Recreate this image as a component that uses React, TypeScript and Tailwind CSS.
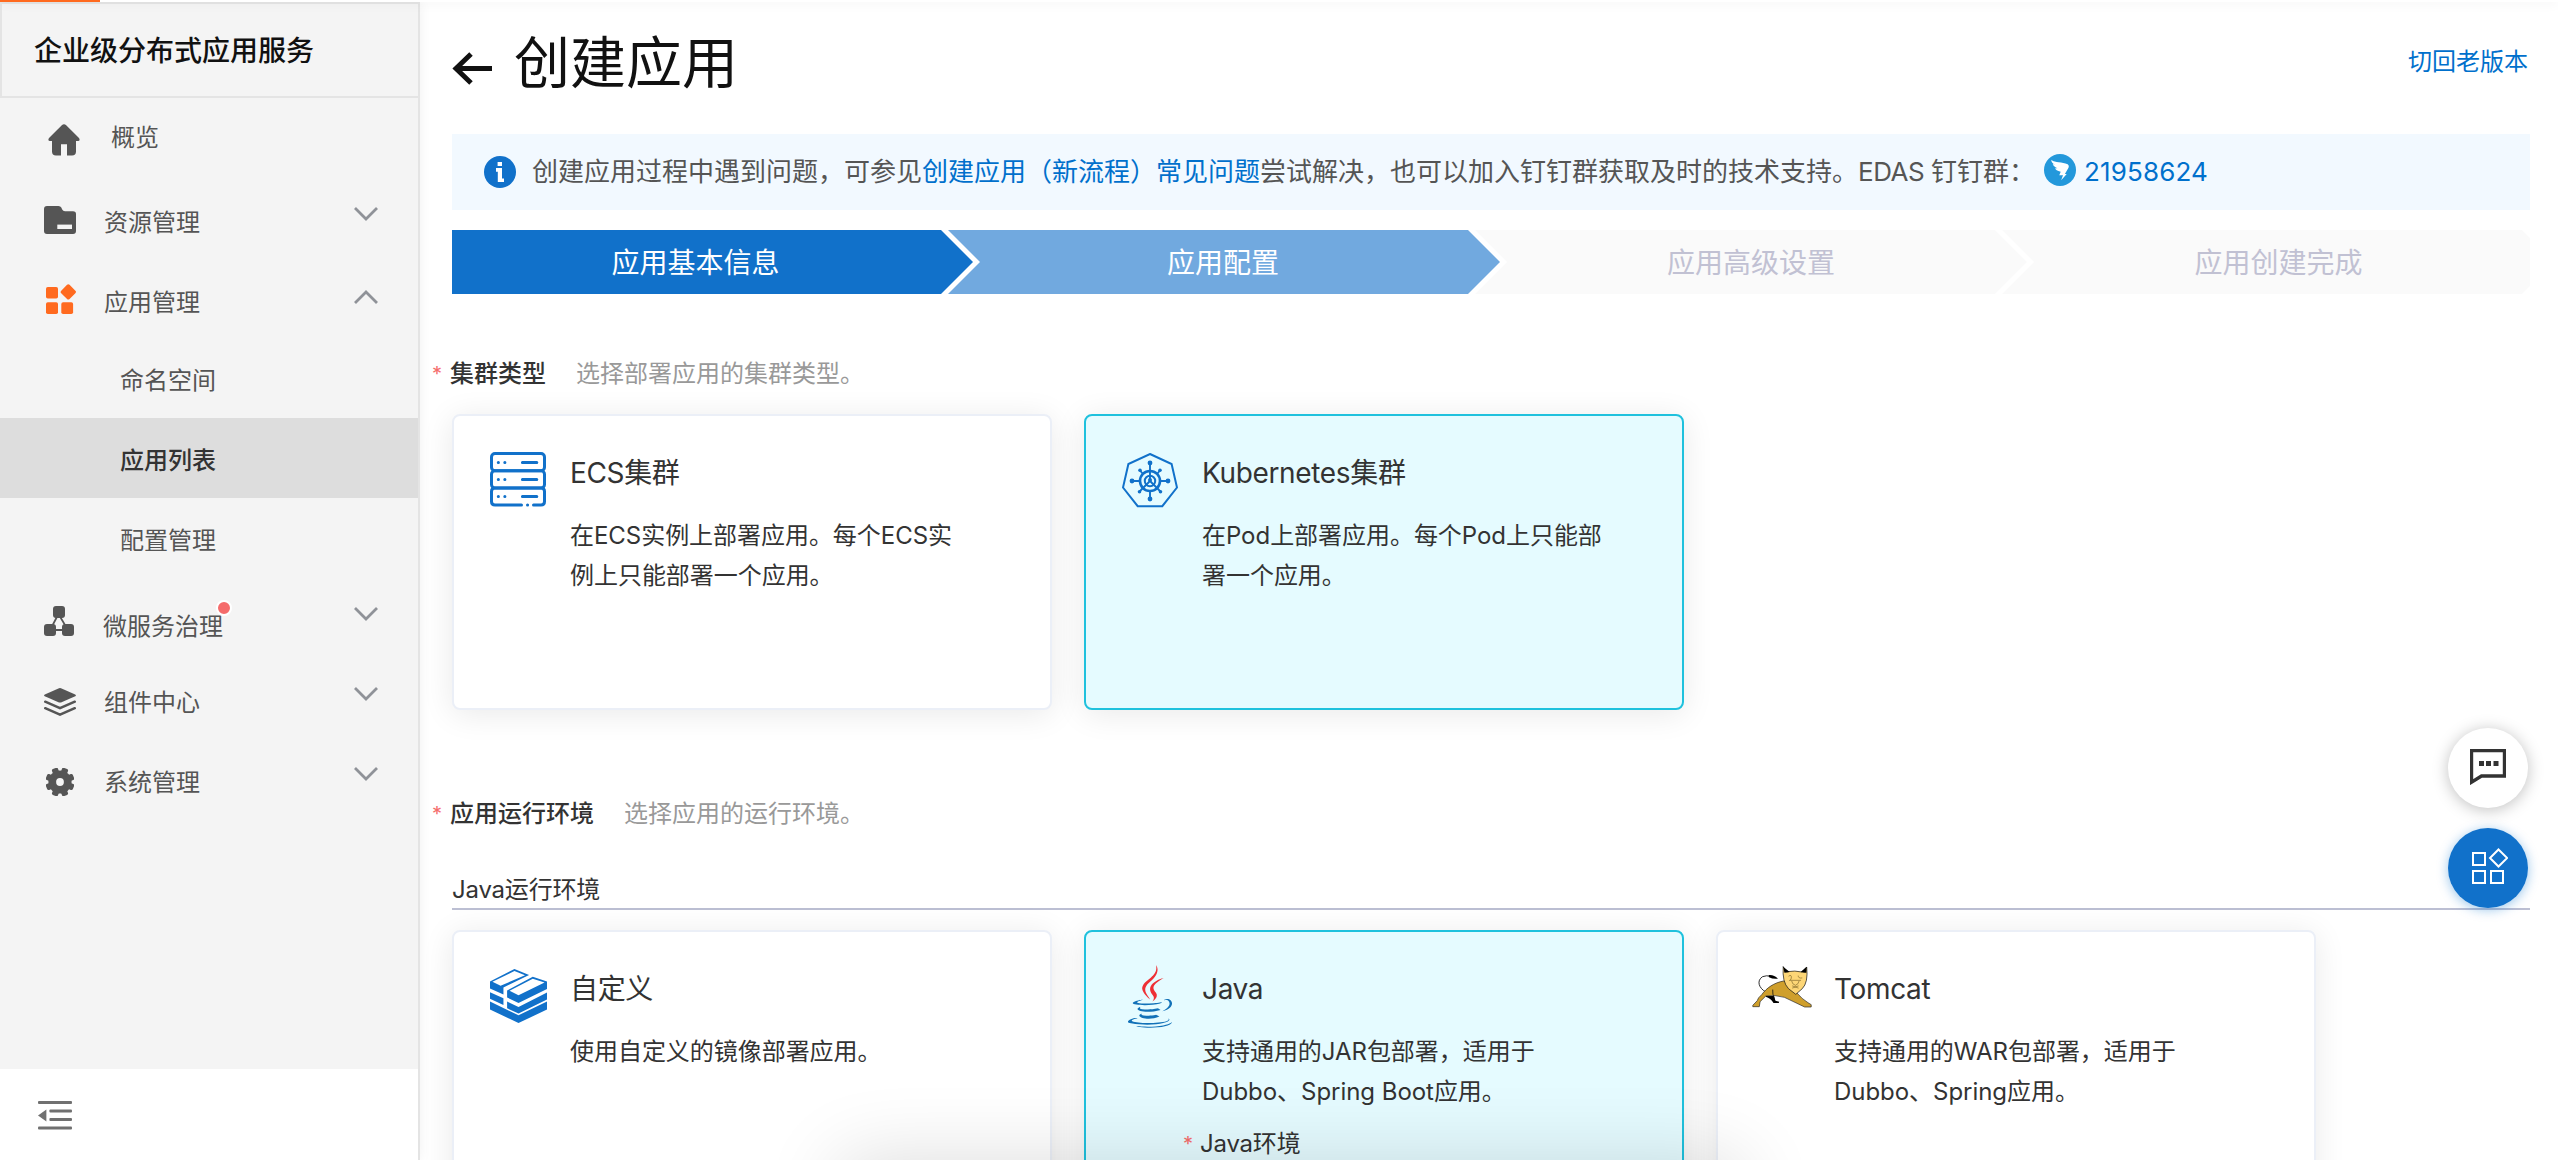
import React from "react";

const FONT = "font-['Inter','Noto_Sans_CJK_SC',sans-serif]";

/* ---------- sidebar icons ---------- */

const HomeIcon = () => (
  <svg width="32" height="32" viewBox="0 0 32 32" fill="#555">
    <path d="M13.8 1.2Q16 -.8 18.2 1.2L31 14Q32.6 16.6 30 17H28V27.5Q28 31.5 24 31.5H19V20.3H13V31.5H8Q4 31.5 4 27.5V17H2Q-.6 16.6 1 14Z" />
  </svg>
);

const FolderIcon = () => (
  <svg width="32" height="28" viewBox="0 0 32 28">
    <path d="M3 0H14.5Q16.5 0 17.3 1.6L18.2 3.6Q19 5.2 21 5.2H29Q32 5.2 32 8V25Q32 28 29 28H3Q0 28 0 25V3Q0 0 3 0Z" fill="#555" />
    <rect x="13.3" y="18.6" width="14.7" height="4.4" fill="#f4f4f4" />
  </svg>
);

const AppsIcon = () => (
  <svg width="30" height="30" viewBox="0 0 30 30" fill="#ff6a1f">
    <rect x="0" y="3" width="12" height="11.5" rx="1.8" />
    <rect x="0" y="18.2" width="12" height="11.8" rx="1.8" />
    <rect x="15.3" y="18.2" width="11.8" height="11.8" rx="1.8" />
    <rect x="16.4" y="2" width="11.8" height="11.8" rx="1.8" transform="rotate(45 22.3 7.9)" />
  </svg>
);

const ServiceIcon = () => (
  <svg width="30" height="30" viewBox="0 0 30 30" fill="#555">
    <path d="M14.5 8L6 24H24Z" fill="none" stroke="#555" strokeWidth="1.8" />
    <rect x="9" y="0" width="12" height="12" rx="3" />
    <rect x="0" y="18" width="12" height="12" rx="3" />
    <rect x="18" y="18" width="12" height="12" rx="3" />
  </svg>
);

const LayersIcon = () => (
  <svg width="32" height="28" viewBox="0 0 32 28">
    <path d="M15 .3Q16 -.1 17 .3L31.2 6.6Q32.6 7.4 31.2 8.2L17 14.4Q16 14.8 15 14.4L.8 8.2Q-.6 7.4 .8 6.6Z" fill="#555" />
    <path d="M1.2 13.7L16 20.2L30.8 13.7M1.2 20.2L16 26.6L30.8 20.2" fill="none" stroke="#555" strokeWidth="2.5" strokeLinecap="round" />
  </svg>
);

const GearIcon = () => (
  <svg width="28" height="28" viewBox="0 0 28 28" fill="#555">
    <circle cx="14" cy="14" r="11.6" />
    {[22.5, 67.5, 112.5, 157.5, 202.5, 247.5, 292.5, 337.5].map((a) => (
      <rect key={a} x="10.8" y="-.6" width="6.4" height="8" rx="1.6" transform={`rotate(${a} 14 14)`} />
    ))}
    <circle cx="14" cy="14" r="3.9" fill="#f4f4f4" />
  </svg>
);

const Chevron = ({ up }: { up?: boolean }) => (
  <svg width="24" height="14" viewBox="0 0 24 14" fill="none" stroke="#8f9298" strokeWidth="2.8">
    <path d={up ? "M1 13L12 2L23 13" : "M1 1L12 12L23 1"} />
  </svg>
);

/* ---------- card icons ---------- */

const ServerIcon = () => (
  <svg width="56" height="55" viewBox="0 0 56 55" fill="none" stroke="#1171ca" strokeWidth="3" strokeLinecap="round">
    <rect x="1.5" y="1.5" width="53" height="17.2" rx="3.5" />
    <rect x="1.5" y="18.7" width="53" height="17.2" rx="3.5" />
    <path d="M31.5 53H5Q1.5 53 1.5 49.5V39.4Q1.5 35.9 5 35.9H51Q54.5 35.9 54.5 39.4V49.5Q54.5 53 51 53H43.5M37.5 53H37.6" />
    {[10.4, 27.4, 44.6].map((y) => (
      <path key={y} d={`M8.3 ${y}H8.4M14.8 ${y}H14.9M32.4 ${y}H46.8`} />
    ))}
  </svg>
);

const KubeIcon = () => (
  <svg width="56" height="55" viewBox="0 0 56 55" fill="none" stroke="#1171ca">
    <path d="M28 1L49.6 11L55 34.5L40.3 53.2H15.7L1 34.5L6.4 11Z" strokeWidth="2" />
    <circle cx="28" cy="28" r="10" strokeWidth="2.6" />
    <circle cx="28" cy="28" r="5.2" strokeWidth="2" />
    <path d="M28 28V9M28 38V46M18 28H10M38 28H46M28 28L19.5 36.5L17.5 38.7M28 28L36.5 36.5L38.5 38.7M21 21L18 17.5M35 21L38 17.5" strokeWidth="1.9" />
    <g fill="#1171ca" stroke="none">
      <circle cx="28" cy="10" r="2.4" />
      <circle cx="28" cy="46" r="2.4" />
      <circle cx="10" cy="28" r="2.4" />
      <circle cx="46" cy="28" r="2.4" />
      <circle cx="18" cy="17.3" r="1.8" />
      <circle cx="38" cy="17.3" r="1.8" />
      <circle cx="17.5" cy="38.7" r="1.8" />
      <circle cx="38.5" cy="38.7" r="1.8" />
      <circle cx="28" cy="27" r="2" />
    </g>
  </svg>
);

const StackIcon = () => (
  <svg width="57" height="54" viewBox="147 567 140 161" preserveAspectRatio="none" fill="#1171ca">
    <path fillRule="evenodd" d="M147 604L207 567L243 585L180 622V643L147 625ZM153 605L173 617L233 586L207 573Z" />
    <path d="M147 636L180 654V674L147 656Z" />
    <path fillRule="evenodd" d="M189 631L252 590L287 604V627L217 668L189 652ZM195 632L217 645L281 607L252 596Z" />
    <path d="M189 664L217 680L287 637V658L217 700L189 684Z" />
    <path d="M147 664L217 705L287 664V688L217 728L147 688Z" />
  </svg>
);

const JavaIcon = () => (
  <svg width="46" height="63" viewBox="16 1 96 126" preserveAspectRatio="none">
    <g fill="#1271b8">
      <path d="M47.617 98.12s-4.767 2.774 3.397 3.71c9.892 1.13 14.947.968 25.845-1.092 0 0 2.871 1.795 6.873 3.351-24.439 10.47-55.308-.607-36.115-5.969zm-2.988-13.665s-5.348 3.959 2.823 4.805c10.567 1.091 18.91 1.18 33.354-1.6 0 0 1.993 2.025 5.132 3.131-29.542 8.64-62.446.68-41.309-6.336z" />
      <path d="M102.123 108.229s3.529 2.91-3.888 5.159c-14.102 4.272-58.706 5.56-71.094.171-4.451-1.938 3.899-4.625 6.526-5.192 2.739-.593 4.303-.485 4.303-.485-4.953-3.487-32.013 6.85-13.743 9.815 49.821 8.076 90.817-3.637 77.896-9.468zM49.912 70.294s-22.686 5.389-8.033 7.348c6.188.828 18.518.638 30.011-.326 9.39-.789 18.813-2.474 18.813-2.474s-3.308 1.419-5.704 3.053c-23.042 6.061-67.544 3.238-54.731-2.958 10.832-5.239 19.644-4.643 19.644-4.643zm40.697 22.747c23.421-12.167 12.591-23.86 5.032-22.285-1.848.385-2.677.72-2.677.72s.688-1.079 2-1.543c14.953-5.255 26.451 15.503-4.823 23.725 0-.002.359-.327.468-.617z" />
      <path d="M52.214 126.021c22.476 1.437 57-.8 57.817-11.436 0 0-1.571 4.032-18.577 7.231-19.186 3.612-42.854 3.191-56.887.874 0 .001 2.875 2.381 17.647 3.331z" />
    </g>
    <g fill="#ee3035">
      <path d="M69.802 61.271c6.025 6.935-1.58 13.17-1.58 13.17s15.289-7.891 8.269-17.777c-6.559-9.215-11.587-13.792 15.635-29.58 0 .001-42.731 10.67-22.324 34.187z" />
      <path d="M76.491 1.587S89.459 14.563 64.188 34.51c-20.266 16.006-4.621 25.13-.007 35.559-11.831-10.673-20.509-20.07-14.688-28.815C58.041 28.42 81.722 22.195 76.491 1.587z" />
    </g>
  </svg>
);

const TomcatIcon = () => (
  <svg width="60" height="42" viewBox="126 196 148 126" preserveAspectRatio="none" strokeLinejoin="round" strokeLinecap="round">
    <path d="M160 274C142 262 137 240 152 228Q162 223 172 227" fill="none" stroke="#111" strokeWidth="2.4" />
    <path d="M167 223Q180 221 190 234Q178 236 168 230Z" fill="#000" />
    <path d="M160 284L180 286L184 300L193 303L192 307H179Q172 292 160 288Z" fill="#000" />
    <path d="M204 241C180 246 162 262 150 282Q140 292 139 300L128 314V318H144L146 303L160 286Q184 282 206 290L256 319H272V312L264 306Q250 296 236 276Z" fill="#cf9f2c" stroke="#222" strokeWidth="1.8" />
    <path d="M177 268Q176 280 181 294" fill="none" stroke="#111" strokeWidth="2.2" />
    <path d="M203 199L213 213Q232 209 249 214L261 199Q265 246 250 264L234 281L216 264Q200 244 203 199Z" fill="#fdd676" stroke="#111" strokeWidth="1.9" />
    <path d="M203 198L219 214Q212 216 206 216ZM261 198L246 214Q252 217 260 216Z" fill="#000" />
    <path d="M217 226Q224 220 223 232Q223 238 218 240M249 232Q240 234 240 226M221 239H246M224 242Q225 251 233 254Q241 251 242 242M226 256L240 262M240 256L226 262" fill="none" stroke="#5a4614" strokeWidth="1.4" />
  </svg>
);

/* ---------- building blocks ---------- */

type NavProps = {
  icon: React.ReactNode;
  label: string;
  iconCls: string;
  labelCls: string;
  chevronCls?: string;
  up?: boolean;
  dot?: boolean;
};

const NavItem = ({ icon, label, iconCls, labelCls, chevronCls, up, dot }: NavProps) => (
  <div className="flex h-20 items-center">
    <span className={`flex shrink-0 ${iconCls}`}>{icon}</span>
    <span className={`relative text-2xl leading-8 text-[#555] ${labelCls}`}>
      {label}
      {dot && <i className="absolute -top-[11px] -right-[9px] size-4 rounded-full border-2 border-white bg-[#f56c6c]" />}
    </span>
    {chevronCls && (
      <span className={`mr-10 ml-auto flex ${chevronCls}`}>
        <Chevron up={up} />
      </span>
    )}
  </div>
);

const SubItem = ({ label, active }: { label: string; active?: boolean }) => (
  <div
    className={
      active
        ? "flex h-20 items-center bg-[#ddd] pt-1.5 pl-[120px] text-2xl font-medium text-[#333]"
        : "flex h-20 items-center pt-1.5 pl-[120px] text-2xl text-[#555]"
    }
  >
    {label}
  </div>
);

const FieldLabel = ({ label, hint }: { label: string; hint: string }) => (
  <div className="flex h-10 items-center pt-0.5 text-2xl">
    <span className="-ml-5 w-[18px] text-xl text-[#f56c6c]">*</span>
    <span className="font-medium text-[#333]">{label}</span>
    <span className="ml-[30px] text-[#999]">{hint}</span>
  </div>
);

type CardProps = {
  icon: React.ReactNode;
  iconCls: string;
  title: string;
  lines: string[];
  active?: boolean;
  children?: React.ReactNode;
};

const Card = ({ icon, iconCls, title, lines, active, children }: CardProps) => (
  <div
    className={
      active
        ? "flex h-[296px] w-[600px] shrink-0 rounded-lg border-2 border-[#1fc1dd] bg-[#e5fbff] shadow-[0_4px_32px_rgba(0,0,0,0.09)]"
        : "flex h-[296px] w-[600px] shrink-0 rounded-lg border-2 border-[#ebeff7] bg-white shadow-[0_4px_32px_rgba(0,0,0,0.09)]"
    }
  >
    <div className={`w-[116px] shrink-0 ${iconCls}`}>{icon}</div>
    <div className="pt-[37px]">
      <div className="text-[28px] leading-10 tracking-[-0.35px] text-[#333]">{title}</div>
      <div className="mt-[23px] text-2xl leading-10 tracking-[-0.04px] whitespace-nowrap text-[#333]">
        {lines.map((l) => (
          <div key={l}>{l}</div>
        ))}
      </div>
      {children}
    </div>
  </div>
);

export default function App() {
  return (
    <div lang="zh-CN" className={`relative flex h-[1160px] w-[2558px] flex-col overflow-hidden bg-white ${FONT}`}>
      <div className="relative z-10 h-0.5 shrink-0 bg-white shadow-[0_0_12px_rgba(0,0,0,0.14)]">
        <div className="h-0.5 w-[100px] bg-[#ff6a1f]" />
      </div>

      <div className="flex min-h-0 flex-1">
        {/* Sidebar */}
        <aside className="flex w-[420px] shrink-0 flex-col border-r-2 border-[#e4e4e4] bg-[#f4f4f4] shadow-[0_0_12px_rgba(0,0,0,0.06)]">
          <div className="flex h-24 shrink-0 items-center border-2 border-r-0 border-[#e4e4e4] pt-0.5 pl-8 text-[28px] font-medium text-[#111]">
            企业级分布式应用服务
          </div>
          <nav className="flex-1">
            <NavItem icon={<HomeIcon />} label="概览" iconCls="ml-12 mt-1" labelCls="ml-[31px]" />
            <NavItem icon={<FolderIcon />} label="资源管理" iconCls="ml-11 mt-1" labelCls="ml-7 mt-2.5" chevronCls="-mt-2" />
            <NavItem icon={<AppsIcon />} label="应用管理" iconCls="ml-[46px] mt-0.5" labelCls="ml-7 mt-2.5" chevronCls="-mt-0.5" up />
            <SubItem label="命名空间" />
            <SubItem label="应用列表" active />
            <SubItem label="配置管理" />
            <NavItem icon={<ServiceIcon />} label="微服务治理" iconCls="ml-11 mt-1.5" labelCls="ml-[29px] mt-[17px]" chevronCls="-mt-2" dot />
            <NavItem icon={<LayersIcon />} label="组件中心" iconCls="ml-11 mt-2" labelCls="ml-7 mt-2.5" chevronCls="-mt-2" />
            <NavItem icon={<GearIcon />} label="系统管理" iconCls="ml-[46px] mt-2" labelCls="ml-[30px] mt-2.5" chevronCls="-mt-2" />
          </nav>
          <div className="h-[91px] shrink-0 bg-white pt-8 pl-[38px]">
            <svg width="34" height="29" viewBox="0 0 34 29" fill="#707070">
              <rect y="0" width="34" height="3" rx="1" />
              <rect x="11.4" y="8.5" width="22.6" height="3" rx="1" />
              <rect x="11.4" y="17" width="22.6" height="3" rx="1" />
              <rect y="25.4" width="34" height="3" rx="1" />
              <path d="M0 14.4L8.4 8.4V20.4Z" />
            </svg>
          </div>
        </aside>

        {/* Main */}
        <main className="flex flex-1 flex-col pr-7 pl-8">
          <header className="flex h-[132px] shrink-0 items-start pt-5">
            <svg className="mt-[30px]" width="41" height="33" viewBox="0 0 41 33" fill="none" stroke="#111" strokeWidth="5">
              <path d="M19 2L4 16.5L19 31M4 16.5H40" />
            </svg>
            <h1 className="ml-[21px] text-[56px] leading-[82px] text-[#111]">创建应用</h1>
            <a className="mt-6 mr-0.5 ml-auto text-2xl leading-8 text-[#0070cc]">切回老版本</a>
          </header>

          <div className="flex h-[76px] shrink-0 items-center bg-[#f2f9ff] pl-8 text-[26px] whitespace-nowrap text-[#555]">
            <svg className="mr-4" width="32" height="32" viewBox="0 0 32 32">
              <circle cx="16" cy="16" r="16" fill="#1171ca" />
              <path d="M13.6 6H18V10H13.6ZM12 12H18V22.4H20V26H13.8V15.8H12Z" fill="#fff" />
            </svg>
            <span className="-mt-0.5">
              创建应用过程中遇到问题，可参见<a className="text-[#0070cc]">创建应用（新流程）常见问题</a>尝试解决，也可以加入钉钉群获取及时的技术支持。<span className="tracking-[-0.5px]">EDAS </span>钉钉群：
            </span>
            <svg className="-mt-1 ml-[9px]" width="32" height="32" viewBox="431 462 69 96" preserveAspectRatio="none">
              <ellipse cx="465.5" cy="510" rx="34.5" ry="48" fill="#2398db" />
              <path d="M447 479C455 490 470 484 482 493Q487 498 482 508L476 522H480L468 541L472 526H464L467 515Q456 512 455 505H460Q450 498 450 492L455 494Q446 488 447 479Z" fill="#fff" />
            </svg>
            <a className="-mt-0.5 ml-2 tracking-[0.15px] text-[#0070cc]">21958624</a>
          </div>

          <div className="mt-5 flex h-16 shrink-0 text-[28px] leading-[66px]">
            <div className="w-[521px] bg-[#1171ca] pr-[34px] text-center text-white [clip-path:polygon(0_0,489px_0,521px_50%,489px_100%,0_100%)]">应用基本信息</div>
            <div className="-ml-[25px] w-[552px] bg-[#71a9df] pr-0.5 text-center text-white [clip-path:polygon(0_0,520px_0,552px_50%,520px_100%,0_100%,32px_50%)]">应用配置</div>
            <div className="-ml-[25px] w-[552px] bg-[#fafafa] text-center text-[#c1c1d3] [clip-path:polygon(0_0,520px_0,552px_50%,520px_100%,0_100%,32px_50%)]">应用高级设置</div>
            <div className="-ml-[25px] w-[528px] bg-[#fafafa] pl-[25px] text-center text-[#c1c1d3] [clip-path:polygon(0_0,520px_0,528px_8px,528px_56px,520px_100%,0_100%,32px_50%)]">应用创建完成</div>
          </div>

          <div className="mt-[59px]">
            <FieldLabel label="集群类型" hint="选择部署应用的集群类型。" />
          </div>
          <div className="mt-[21px] flex gap-8">
            <Card icon={<ServerIcon />} iconCls="pl-9 pt-9" title="ECS集群" lines={["在ECS实例上部署应用。每个ECS实", "例上只能部署一个应用。"]} />
            <Card icon={<KubeIcon />} iconCls="pl-9 pt-[37px]" title="Kubernetes集群" lines={["在Pod上部署应用。每个Pod上只能部", "署一个应用。"]} active />
          </div>

          <div className="mt-[83px]">
            <FieldLabel label="应用运行环境" hint="选择应用的运行环境。" />
          </div>
          <div className="mt-9 flex h-[41px] shrink-0 items-center border-b-2 border-[#bcbfd3] pt-0.5 text-2xl tracking-[-0.2px] text-[#333]">Java运行环境</div>
          <div className="mt-5 flex gap-8">
            <Card icon={<StackIcon />} iconCls="pl-9 pt-[37px]" title="自定义" lines={["使用自定义的镜像部署应用。"]} />
            <Card icon={<JavaIcon />} iconCls="pl-[41px] pt-[33px]" title="Java" lines={["支持通用的JAR包部署，适用于", "Dubbo、Spring Boot应用。"]} active>
              <div className="mt-3 -ml-[19px] flex h-10 items-center text-2xl tracking-[-0.2px] text-[#333]">
                <span className="w-[17px] text-xl text-[#f56c6c]">*</span>Java环境
              </div>
            </Card>
            <Card icon={<TomcatIcon />} iconCls="pl-[34px] pt-[34px]" title="Tomcat" lines={["支持通用的WAR包部署，适用于", "Dubbo、Spring应用。"]} />
          </div>
        </main>
      </div>

      {/* Floating actions */}
      <div className="absolute top-[728px] right-[30px] flex flex-col gap-5">
        <div className="flex size-20 items-center justify-center rounded-full bg-white shadow-[0_2px_16px_rgba(0,0,0,0.25)]">
          <svg width="36" height="36" viewBox="0 0 36 36" className="-mt-0.5">
            <path d="M1.5 1.5H34.5V27H11.5L1.5 33.2Z" fill="none" stroke="#333" strokeWidth="3.4" />
            <path d="M9 12H14V17H9ZM16 12H21V17H16ZM23.5 12H28.5V17H23.5Z" fill="#333" />
          </svg>
        </div>
        <div className="flex size-20 items-center justify-center rounded-full bg-[#1171ca] shadow-[0_2px_12px_rgba(0,112,204,0.4)]">
          <svg width="36" height="36" viewBox="0 0 36 36" className="-mt-1 ml-1" fill="none" stroke="#fff" strokeWidth="2">
            <path d="M1 5H13V17H1ZM1 23H13V35H1ZM19 23H31V35H19ZM26.5 1.5L35.2 10L26.5 18.5L18 10Z" />
          </svg>
        </div>
      </div>

      {/* Soft shade rising from below the page */}
      <div className="pointer-events-none absolute top-[1160px] left-[840px] h-24 w-[900px] shadow-[0_0_80px_rgba(0,0,0,0.14)]" />
    </div>
  );
}
